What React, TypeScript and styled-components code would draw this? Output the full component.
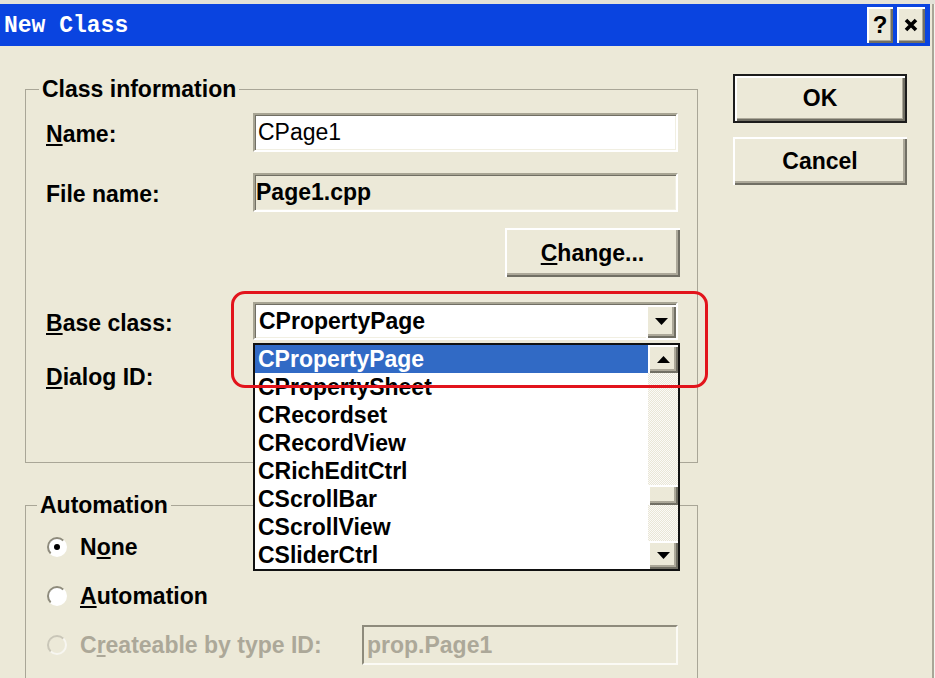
import React from "react";
import styled, { createGlobalStyle } from "styled-components";

const GlobalStyle = createGlobalStyle`
  html, body {
    margin: 0;
    padding: 0;
    background: #ece9d8;
  }
  body {
    font-family: "Liberation Sans", Arial, sans-serif;
  }
`;

const classes = [
  "CPropertyPage",
  "CPropertySheet",
  "CRecordset",
  "CRecordView",
  "CRichEditCtrl",
  "CScrollBar",
  "CScrollView",
  "CSliderCtrl",
];

function Arrow({ up }: { up?: boolean }) {
  return (
    <svg width="13" height="7" viewBox="0 0 13 7">
      <polygon points={up ? "0,7 13,7 6.5,0" : "0,0 13,0 6.5,7"} fill="#000" />
    </svg>
  );
}

function CloseGlyph() {
  return (
    <svg width="14" height="14" viewBox="0 0 14 14">
      <path d="M2 2 L12 12 M12 2 L2 12" stroke="#000" strokeWidth="3.6" />
    </svg>
  );
}

export default function App() {
  return (
    <>
      <GlobalStyle />
      <Window>
        <TitleBar>
          <TitleText>New Class</TitleText>
          <CaptionButtons>
            <CaptionButton $w={26}>?</CaptionButton>
            <CaptionButton $w={28}>
              <CloseGlyph />
            </CaptionButton>
          </CaptionButtons>
        </TitleBar>

        <Body>
          <LeftColumn>
            <GroupBox>
              <Legend $offset={13}>Class information</Legend>
              <FieldList>
                <FieldRow $mt={11} $h={39}>
                  <Label>
                    <u>N</u>ame:
                  </Label>
                  <TextBox $thin>CPage1</TextBox>
                </FieldRow>
                <FieldRow $mt={21} $h={39}>
                  <Label>File name:</Label>
                  <TextBox $readOnly>Page1.cpp</TextBox>
                </FieldRow>
                <FieldRow $mt={16} $h={49}>
                  <span />
                  <ChangeButton>
                    <u>C</u>hange...
                  </ChangeButton>
                </FieldRow>
                <FieldRow $mt={25} $h={38}>
                  <Label>
                    <u>B</u>ase class:
                  </Label>
                  <Combo>
                    <ComboText>CPropertyPage</ComboText>
                    <DropButton>
                      <Arrow />
                    </DropButton>
                    <DropList>
                      <Items>
                        {classes.map((c, i) => (
                          <Item key={c} $selected={i === 0}>
                            {c}
                          </Item>
                        ))}
                      </Items>
                      <ScrollBar>
                        <ScrollButton>
                          <Arrow up />
                        </ScrollButton>
                        <Track>
                          <Thumb />
                        </Track>
                        <ScrollButton>
                          <Arrow />
                        </ScrollButton>
                      </ScrollBar>
                    </DropList>
                  </Combo>
                </FieldRow>
                <FieldRow $mt={16} $h={38}>
                  <Label>
                    <u>D</u>ialog ID:
                  </Label>
                  <Combo />
                </FieldRow>
              </FieldList>
            </GroupBox>

            <GroupBox>
              <Legend $offset={11}>Automation</Legend>
              <OptionList>
                <Option>
                  <Radio $checked />
                  <span>
                    N<u>o</u>ne
                  </span>
                </Option>
                <Option>
                  <Radio />
                  <span>
                    <u>A</u>utomation
                  </span>
                </Option>
                <Option $disabled>
                  <Radio $disabled />
                  <span>
                    C<u>r</u>eateable by type ID:
                  </span>
                  <DisabledBox>prop.Page1</DisabledBox>
                </Option>
              </OptionList>
            </GroupBox>
          </LeftColumn>

          <RightColumn>
            <PushButton $default $h={49}>OK</PushButton>
            <PushButton $h={48}>Cancel</PushButton>
          </RightColumn>
        </Body>

        <Callout />
      </Window>
    </>
  );
}

const Window = styled.div`
  position: relative;
  width: 935px;
  height: 678px;
  overflow: hidden;
  box-sizing: border-box;
  border-top: 4px solid #e4e2d8;
  background: #ece9d8;
  box-shadow: inset -1px 0 #f4f3ee, inset -3px 0 #a9a697;
  font: bold 23px "Liberation Sans", Arial, sans-serif;
  color: #000;
`;

const TitleBar = styled.div`
  width: 930px;
  height: 42px;
  box-sizing: border-box;
  padding: 2px 5px 0 4px;
  display: flex;
  align-items: center;
  justify-content: space-between;
  background: #0a44e0;
`;

const TitleText = styled.span`
  font: bold 23px "Liberation Mono", "Courier New", monospace;
  color: #fff;
`;

const CaptionButtons = styled.div`
  display: flex;
  gap: 4px;
  margin-top: -2px;
`;

const CaptionButton = styled.div<{ $w: number }>`
  width: ${(p) => p.$w}px;
  height: 36px;
  display: flex;
  align-items: center;
  justify-content: center;
  background: #ece9d8;
  font: bold 24px "Liberation Sans", Arial, sans-serif;
  box-shadow: inset 2px 2px #fff, inset -2px -2px #716f64, inset -3px -3px #aca899;
`;

const Body = styled.div`
  display: flex;
  gap: 35px;
  padding-left: 25px;
`;

const LeftColumn = styled.div`
  width: 673px;
  padding-top: 30px;
  display: flex;
  flex-direction: column;
  gap: 29px;
`;

const RightColumn = styled.div`
  padding-top: 28px;
  display: flex;
  flex-direction: column;
  gap: 14px;
`;

const GroupBox = styled.fieldset`
  margin: 0;
  padding: 0;
  min-width: 0;
  border: 1px solid #a9a697;
`;

const Legend = styled.legend<{ $offset: number }>`
  margin-left: ${(p) => p.$offset}px;
  padding: 0 3px;
  line-height: 26px;
`;

const FieldList = styled.div`
  display: flex;
  flex-direction: column;
  padding: 0 19px 68px 20px;
`;

const FieldRow = styled.div<{ $mt: number; $h: number }>`
  display: grid;
  grid-template-columns: 207px 425px;
  align-items: center;
  height: ${(p) => p.$h}px;
  margin-top: ${(p) => p.$mt}px;
`;

const Label = styled.span`
  line-height: 26px;
  padding-top: 3px;
`;

const sunken = `
  border: 2px solid;
  border-color: #a7a493 #ffffff #ffffff #a7a493;
  box-shadow: inset 1px 1px #716f64, inset -1px -1px #f1efe2;
`;

const raised = `
  background: #ece9d8;
  box-shadow: inset 2px 2px #fff, inset -2px -2px #716f64, inset -4px -4px #aca899;
`;

const TextBox = styled.div<{ $readOnly?: boolean; $thin?: boolean }>`
  height: 100%;
  box-sizing: border-box;
  ${sunken}
  background: ${(p) => (p.$readOnly ? "#ece9d8" : "#fff")};
  padding-left: ${(p) => (p.$readOnly ? 1 : 3)}px;
  display: flex;
  align-items: center;
  font-weight: ${(p) => (p.$thin ? "normal" : "bold")};
`;

const ChangeButton = styled.div`
  justify-self: end;
  margin-right: -2px;
  width: 175px;
  height: 49px;
  display: flex;
  align-items: center;
  justify-content: center;
  padding-top: 2px;
  box-sizing: border-box;
  ${raised}
`;

const Combo = styled.div`
  position: relative;
  height: 100%;
  box-sizing: border-box;
  ${sunken}
  background: #fff;
  display: flex;
  align-items: center;
  padding-left: 4px;
`;

const ComboText = styled.span`
  flex: 1;
`;

const DropButton = styled.div`
  width: 30px;
  height: 33px;
  display: flex;
  align-items: center;
  justify-content: center;
  ${raised}
`;

const DropList = styled.div`
  position: absolute;
  z-index: 2;
  top: calc(100% + 5px);
  left: -2px;
  width: 427px;
  height: 228px;
  box-sizing: border-box;
  border: 2px solid #111;
  background: #fff;
  display: flex;
`;

const Items = styled.div`
  flex: 1;
  display: flex;
  flex-direction: column;
`;

const Item = styled.div<{ $selected?: boolean }>`
  height: 28px;
  box-sizing: border-box;
  padding: 1px 0 0 3px;
  line-height: 27px;
  white-space: nowrap;
  background: ${(p) => (p.$selected ? "#316ac5" : "transparent")};
  color: ${(p) => (p.$selected ? "#fff" : "#000")};
`;

const ScrollBar = styled.div`
  width: 30px;
  display: flex;
  flex-direction: column;
  background: repeating-conic-gradient(#fbfaf7 0 25%, #e9e6d6 0 50%) 0 0 / 2px 2px;
`;

const ScrollButton = styled.div`
  height: 28px;
  display: flex;
  align-items: center;
  justify-content: center;
  ${raised}
`;

const Track = styled.div`
  flex: 1;
  padding-top: 112px;
`;

const Thumb = styled.div`
  height: 20px;
  ${raised}
`;

const OptionList = styled.div`
  display: flex;
  flex-direction: column;
  gap: 9px;
  padding: 9px 19px 60px 21px;
`;

const Option = styled.div<{ $disabled?: boolean }>`
  height: 40px;
  display: flex;
  align-items: center;
  color: ${(p) => (p.$disabled ? "#aca899" : "#000")};
`;

const Radio = styled.span<{ $checked?: boolean; $disabled?: boolean }>`
  position: relative;
  flex: none;
  width: 20px;
  height: 20px;
  margin-right: 13px;
  box-sizing: border-box;
  border-radius: 50%;
  border: 2px solid;
  border-color: ${(p) =>
    p.$disabled ? "#c9c6b8 #f7f6f1 #f7f6f1 #c9c6b8" : "#8e8b7c #ffffff #ffffff #8e8b7c"};
  background: ${(p) => (p.$disabled ? "#ece9d8" : "#fff")};

  &::after {
    content: "";
    display: ${(p) => (p.$checked ? "block" : "none")};
    position: absolute;
    left: 5px;
    top: 5px;
    width: 6px;
    height: 6px;
    border-radius: 50%;
    background: #000;
  }
`;

const DisabledBox = styled.div`
  margin-left: auto;
  width: 316px;
  height: 40px;
  box-sizing: border-box;
  border: 2px solid;
  border-color: #8e8b7c #fbfaf5 #fbfaf5 #8e8b7c;
  background: #ece9d8;
  padding-left: 3px;
  display: flex;
  align-items: center;
  color: #aca899;
`;

const PushButton = styled.div<{ $default?: boolean; $h: number }>`
  width: 174px;
  height: ${(p) => p.$h}px;
  display: flex;
  align-items: center;
  justify-content: center;
  background: #ece9d8;
  box-shadow: ${(p) =>
    p.$default
      ? "inset 0 0 0 2px #1c1c1c, inset 4px 4px #fff, inset -4px -4px #716f64, inset -5px -5px #aca899"
      : "inset 2px 2px #fff, inset -2px -2px #716f64, inset -4px -4px #aca899"};
`;

const Callout = styled.div`
  position: absolute;
  z-index: 3;
  left: 231px;
  top: 287px;
  width: 477px;
  height: 97px;
  box-sizing: border-box;
  border: 3px solid #e2141c;
  border-radius: 14px;
  pointer-events: none;
`;
